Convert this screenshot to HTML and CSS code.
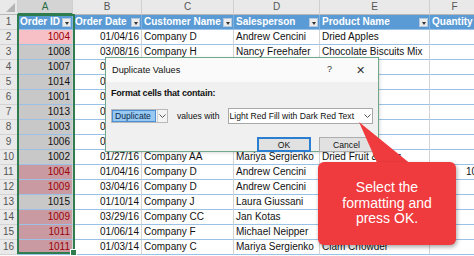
FILE: index.html
```html
<!DOCTYPE html>
<html lang="en">
<head>
  <meta charset="UTF-8" />
  <title>Duplicate Values</title>
  <link rel="stylesheet" href="styles.css">
</head>
<body>
  <div class="sheet">
    <div class="row colhead">
      <div class="corner"><svg width="10" height="10" viewBox="0 0 10 10"><polygon points="10,1 10,10 1,10" fill="#b4b4b4"/></svg></div>
      <div class="col on">A</div>
      <div class="col">B</div>
      <div class="col">C</div>
      <div class="col">D</div>
      <div class="col">E</div>
      <div class="col">F</div>
    </div>

    <div class="row">
      <div class="rn">1</div>
      <div class="th">Order ID<span class="filter"></span></div>
      <div class="th">Order Date<span class="filter"></span></div>
      <div class="th">Customer Name<span class="filter"></span></div>
      <div class="th">Salesperson<span class="filter"></span></div>
      <div class="th">Product Name<span class="filter"></span></div>
      <div class="th">Quantity</div>
    </div>

    <div class="row"><div class="rn">2</div><div class="c num act">1004</div><div class="c num">01/04/16</div><div class="c">Company D</div><div class="c">Andrew Cencini</div><div class="c">Dried Apples</div><div class="c"></div></div>
    <div class="row"><div class="rn">3</div><div class="c num s">1008</div><div class="c num">03/08/16</div><div class="c">Company H</div><div class="c">Nancy Freehafer</div><div class="c">Chocolate Biscuits Mix</div><div class="c"></div></div>
    <div class="row"><div class="rn">4</div><div class="c num s">1007</div><div class="c num">03/07/16</div><div class="c"></div><div class="c"></div><div class="c"></div><div class="c"></div></div>
    <div class="row"><div class="rn">5</div><div class="c num s">1014</div><div class="c num">01/15/16</div><div class="c"></div><div class="c"></div><div class="c"></div><div class="c"></div></div>
    <div class="row"><div class="rn">6</div><div class="c num s">1001</div><div class="c num">02/01/16</div><div class="c"></div><div class="c"></div><div class="c"></div><div class="c"></div></div>
    <div class="row"><div class="rn">7</div><div class="c num s">1013</div><div class="c num">01/20/16</div><div class="c"></div><div class="c"></div><div class="c"></div><div class="c"></div></div>
    <div class="row"><div class="rn">8</div><div class="c num s">1003</div><div class="c num">02/14/16</div><div class="c"></div><div class="c"></div><div class="c"></div><div class="c"></div></div>
    <div class="row"><div class="rn">9</div><div class="c num s">1006</div><div class="c num">03/02/16</div><div class="c"></div><div class="c"></div><div class="c"></div><div class="c"></div></div>
    <div class="row"><div class="rn">10</div><div class="c num s">1002</div><div class="c num">01/27/16</div><div class="c">Company AA</div><div class="c">Mariya Sergienko</div><div class="c">Dried Fruit &amp; Nuts</div><div class="c"></div></div>
    <div class="row"><div class="rn">11</div><div class="c num dup">1004</div><div class="c num">01/04/16</div><div class="c">Company D</div><div class="c">Andrew Cencini</div><div class="c">Dried Apples</div><div class="c num">10</div></div>
    <div class="row"><div class="rn">12</div><div class="c num dup">1009</div><div class="c num">03/04/16</div><div class="c">Company D</div><div class="c">Andrew Cencini</div><div class="c">Dried Pears</div><div class="c"></div></div>
    <div class="row"><div class="rn">13</div><div class="c num s">1015</div><div class="c num">01/10/14</div><div class="c">Company J</div><div class="c">Laura Giussani</div><div class="c">Mozzarella</div><div class="c"></div></div>
    <div class="row"><div class="rn">14</div><div class="c num dup">1009</div><div class="c num">03/29/16</div><div class="c">Company CC</div><div class="c">Jan Kotas</div><div class="c">Crab Meat</div><div class="c"></div></div>
    <div class="row"><div class="rn">15</div><div class="c num dup">1011</div><div class="c num">01/06/14</div><div class="c">Company F</div><div class="c">Michael Neipper</div><div class="c">Gnocchi</div><div class="c"></div></div>
    <div class="row"><div class="rn">16</div><div class="c num dup">1011</div><div class="c num">01/03/14</div><div class="c">Company C</div><div class="c">Mariya Sergienko</div><div class="c">Clam Chowder</div><div class="c"></div></div>

    <div class="selection"><span class="handle"></span></div>

    <div class="dialog">
      <div class="dlg-title">
        <span>Duplicate Values</span>
        <span class="dlg-btns"><span class="help">?</span><span class="close">&#x2715;</span></span>
      </div>
      <div class="dlg-body">
        <div class="dlg-label">Format cells that contain:</div>
        <div class="dlg-row">
          <div class="combo small"><span class="picked">Duplicate</span><span class="chev"><svg width="7" height="4" viewBox="0 0 7 4"><polyline points="0.5,0.5 3.5,3.5 6.5,0.5" fill="none" stroke="#555" stroke-width="1"/></svg></span></div>
          <span class="with">values with</span>
          <div class="combo wide"><span class="val">Light Red Fill with Dark Red Text</span><span class="chev"><svg width="7" height="4" viewBox="0 0 7 4"><polyline points="0.5,0.5 3.5,3.5 6.5,0.5" fill="none" stroke="#555" stroke-width="1"/></svg></span></div>
        </div>
        <div class="dlg-actions">
          <button class="btn default">OK</button>
          <button class="btn">Cancel</button>
        </div>
      </div>
    </div>

    <svg class="pointer" width="80" height="50" viewBox="0 0 80 50"><polygon points="9,2 28,45 62,45" fill="#f03b3e"/></svg>
    <div class="callout">Select the<br>formatting and<br>press OK.</div>
  </div>
</body>
</html>
```

FILE: styles.css
```css
body {
  margin: 0;
  background: #fff;
  overflow: hidden;
  font-family: "Liberation Sans", Arial, sans-serif;
}
.sheet {
  position: relative;
  width: 474px;
  height: 256px;
  overflow: hidden;
}
.row {
  display: grid;
  grid-template-columns: 18px 55px 69px 92px 86px 110px 50px;
  height: 15px;
  font-size: 10px;
  line-height: 14px;
  color: #111;
}
.row > div {
  box-sizing: border-box;
  height: 15px;
  white-space: nowrap;
  overflow: hidden;
}
.colhead > div {
  background: #e9e9e9;
  border-right: 1px solid #d0d0d0;
  border-bottom: 1px solid #b8b8b8;
  text-align: center;
  color: #555;
}
.colhead .corner {
  display: flex;
  align-items: flex-end;
  justify-content: flex-end;
  padding: 0 2px 2px 0;
}
.colhead .col.on {
  background: #d4d4d4;
  color: #2a6a45;
  border-bottom: 2px solid #2f7d4f;
}
.rn {
  background: #e9e9e9;
  border-right: 1px solid #b8b8b8;
  border-bottom: 1px solid #d4d4d4;
  color: #555;
  text-align: center;
}
.th {
  position: relative;
  background: #5b9bd5;
  color: #fff;
  font-weight: bold;
  padding: 0 2px;
  border-right: 1px solid #7fb0de;
  border-bottom: 1px solid #9bc2e6;
}
.filter {
  position: absolute;
  right: 1px;
  top: 3px;
  width: 9px;
  height: 9px;
  box-sizing: border-box;
  background: #ececec;
  border: 1px solid #b7c9dc;
}
.filter::after {
  content: "";
  position: absolute;
  left: 2px;
  top: 3px;
  border-left: 2.5px solid transparent;
  border-right: 2.5px solid transparent;
  border-top: 3px solid #333;
}
.c {
  padding: 0 2px;
  border-right: 1px solid #d4d4d4;
  border-bottom: 1px solid #9bc2e6;
}
.c.num {
  text-align: right;
}
.c.s {
  background: #c8c8c8;
}
.c.act {
  background: #f7bfc6;
  color: #9c0006;
}
.c.dup {
  background: #c99aa1;
  color: #9c0006;
}
.selection {
  position: absolute;
  left: 17px;
  top: 14px;
  width: 58px;
  height: 240px;
  box-sizing: border-box;
  border: 2px solid #2f7d4f;
}
.handle {
  position: absolute;
  right: -4px;
  bottom: -4px;
  width: 5px;
  height: 5px;
  background: #2f7d4f;
  border: 1px solid #fff;
}

.dialog {
  position: absolute;
  left: 105px;
  top: 57px;
  width: 274px;
  height: 95px;
  box-sizing: border-box;
  border: 1px solid #6fa98a;
  background: #f0f0f0;
  font-size: 8.6px;
  color: #111;
  box-shadow: 1px 1px 3px rgba(0, 0, 0, 0.15);
}
.dlg-title {
  height: 24px;
  background: #fafafa;
  display: flex;
  align-items: center;
  justify-content: space-between;
  padding: 0 6px;
  font-size: 9.2px;
}
.dlg-btns {
  display: flex;
  gap: 24px;
  padding-right: 7px;
  color: #333;
}
.help {
  font-size: 9px;
}
.close {
  font-size: 11px;
}
.dlg-body {
  padding: 4px 4px 0 5px;
}
.dlg-label {
  font-weight: bold;
  font-size: 9px;
  letter-spacing: -0.2px;
  line-height: 14px;
}
.dlg-row {
  display: flex;
  align-items: center;
  height: 16px;
  margin-top: 8px;
}
.combo {
  box-sizing: border-box;
  display: flex;
  align-items: center;
  background: #fff;
  border: 1px solid #a9a9a9;
}
.combo.small {
  width: 57px;
  height: 14px;
  background: #f3f3f3;
  border-color: #b8b8b8;
}
.picked {
  height: 12px;
  width: 44px;
  box-sizing: border-box;
  line-height: 11px;
  padding-left: 2px;
  background: #99c9f0;
  border: 1px solid #4a90d9;
  color: #0a2a50;
}
.combo .chev {
  flex: 1;
  display: flex;
  align-items: center;
  justify-content: center;
  align-self: stretch;
  border-left: 1px solid #d0d0d0;
}
.combo.small .chev {
  margin-left: 1px;
}
.with {
  margin: 0 8px 0 9px;
}
.combo.wide {
  width: 145px;
  height: 16px;
}
.combo.wide .val {
  padding-left: 1px;
  width: 133px;
  white-space: nowrap;
}
.combo.wide .chev {
  border-left: none;
}
.dlg-actions {
  display: flex;
  justify-content: flex-end;
  gap: 8px;
  margin-top: 13px;
}
.btn {
  width: 55px;
  height: 15px;
  padding: 0;
  font-family: inherit;
  font-size: 8.6px;
  background: #e1e1e1;
  border: 1px solid #adadad;
  color: #111;
}
.btn.default {
  width: 54px;
  border: 2px solid #2b7fd0;
}

.pointer {
  position: absolute;
  left: 350px;
  top: 120px;
}
.callout {
  position: absolute;
  left: 318px;
  top: 162px;
  width: 138px;
  height: 83px;
  display: flex;
  align-items: center;
  justify-content: center;
  text-align: center;
  background: #f03b3e;
  border-radius: 6px;
  box-shadow: 1px 2px 4px rgba(0, 0, 0, 0.35);
  color: #fff;
  font-size: 14px;
  line-height: 15.5px;
}
```
